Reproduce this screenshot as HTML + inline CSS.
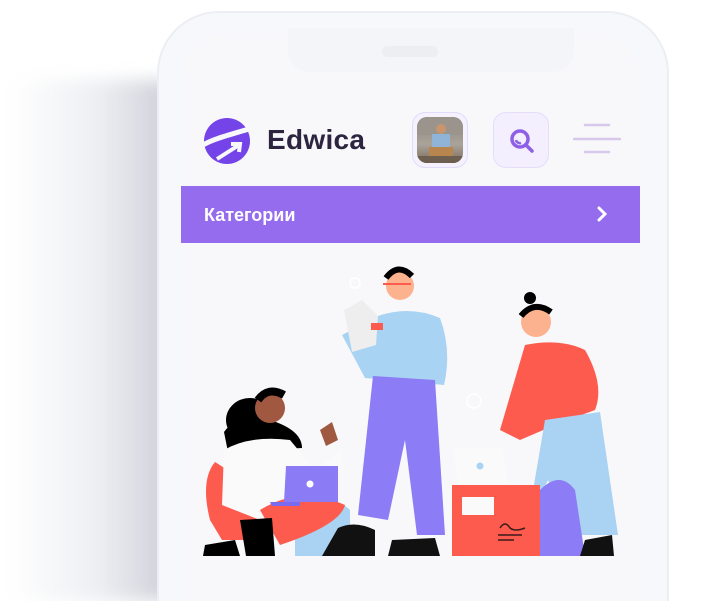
<!DOCTYPE html>
<html><head><meta charset="utf-8"><style>
html,body{margin:0;padding:0;width:706px;height:601px;overflow:hidden;background:#fff;font-family:"Liberation Sans",sans-serif}
#wrap{position:relative;width:706px;height:601px;overflow:hidden}
.shadow{position:absolute;left:10px;top:80px;width:160px;height:521px;background:linear-gradient(90deg,rgba(255,255,255,0) 0%,rgba(225,228,234,.6) 55%,#d3d6dd 92%,#c9ccd4 100%);filter:blur(8px)}
.phone{position:absolute;left:157px;top:11px;width:512px;height:590px;border-radius:62px 62px 0 0;background:#f7f8fb;border:2px solid #eceef3;border-bottom:none;box-sizing:border-box}
.screen{position:absolute;left:181px;top:34px;width:460px;height:567px;border-radius:42px 42px 0 0;background:#f8f8fb}
.notch{position:absolute;left:288px;top:28px;width:286px;height:44px;background:#f4f5f8;border-radius:0 0 22px 22px}
.speaker{position:absolute;left:382px;top:46px;width:56px;height:11px;border-radius:6px;background:#eceef2}
.logo{position:absolute;left:203px;top:115px}
.brand{position:absolute;left:267px;top:124px;font-size:28px;font-weight:bold;color:#2d2540;letter-spacing:.3px}
.av{position:absolute;left:412px;top:112px;width:56px;height:56px;border-radius:13px;background:#f5f2fe;border:1px solid #e2dbfa;box-sizing:border-box}
.av .img{position:absolute;left:4px;top:4px;width:46px;height:46px;border-radius:10px;overflow:hidden;background:linear-gradient(#8b8680,#a9a39a 60%,#7a6a58)}
.sr{position:absolute;left:493px;top:112px;width:56px;height:56px;border-radius:13px;background:#f4effe;border:1px solid #e6ddfb;box-sizing:border-box}
.bar{position:absolute;left:181px;top:186px;width:459px;height:57px;background:#956cee}
.bar span{position:absolute;left:23px;top:19px;font-size:18px;font-weight:bold;color:#fff}
</style></head><body><div id="wrap">
<div class="shadow"></div>
<div class="phone"></div>
<div class="screen"></div>
<div class="notch"></div>
<div class="speaker"></div>
<svg class="logo" width="48" height="52" viewBox="0 0 48 52">
<circle cx="24" cy="26" r="23" fill="#7444e8"/>
<path d="M0 30 C10 24 26 20 46 14" stroke="#f8f8fb" stroke-width="5" fill="none"/>
<path d="M14 44 L36 30 M28 29 L37 29 L36 37" stroke="#f8f8fb" stroke-width="4" fill="none"/>
</svg>
<div class="brand">Edwica</div>
<div class="av"><div class="img">
<svg width="46" height="46"><rect x="0" y="0" width="46" height="18" fill="#9a948c"/><circle cx="24" cy="12" r="5" fill="#c9956f"/><rect x="15" y="17" width="18" height="14" fill="#8fb4d8"/><rect x="12" y="30" width="24" height="9" fill="#b8854f"/><rect x="0" y="39" width="46" height="7" fill="#6d5e50"/></svg>
</div></div>
<div class="sr"><svg width="56" height="56" viewBox="0 0 56 56"><circle cx="26" cy="26" r="8" stroke="#8e60e6" stroke-width="3.5" fill="none"/><path d="M22 27 a4 4 0 0 0 5 3" stroke="#8e60e6" stroke-width="2.5" fill="none"/><path d="M32 32 L38 38" stroke="#8e60e6" stroke-width="3.5" stroke-linecap="round"/></svg></div>
<svg style="position:absolute;left:573px;top:122px" width="48" height="34"><path d="M12 3H36M1 17H47M12 30H36" stroke="#d7c8ec" stroke-width="2.6" stroke-linecap="round"/></svg>
<div class="bar"><span>Категории</span>
<svg style="position:absolute;left:414px;top:20px" width="14" height="16"><path d="M4 2 L10 8 L4 14" stroke="#fff" stroke-width="3" fill="none" stroke-linecap="round"/></svg></div>
<svg style="position:absolute;left:0;top:0" width="706" height="601" viewBox="0 0 706 601">
<path d="M295 515 Q330 490 350 510 L350 556 L295 556 Z" fill="#aad2f2"/>
<path d="M215 462 Q200 480 210 520 L222 540 L270 540 L275 500 Z" fill="#fd5b4e"/>
<ellipse cx="250" cy="420" rx="24" ry="22" fill="#000"/>
<path d="M224 432 Q240 410 270 420 Q302 430 302 448 L228 452 Z" fill="#000"/>
<circle cx="270" cy="408" r="15" fill="#a15841"/>
<path d="M258 400 Q268 386 284 395" stroke="#000" stroke-width="8" fill="none"/>
<path d="M224 450 Q250 435 290 440 L315 470 L340 452 L344 468 L300 505 L260 520 L222 505 Z" fill="#fafafa"/>
<path d="M320 430 L332 422 L338 440 L326 446 Z" fill="#a15841"/>
<path d="M260 510 Q300 485 345 505 Q340 525 280 545 Z" fill="#fd5b4e"/>
<path d="M240 520 L272 518 L275 556 L246 556 Z" fill="#000"/>
<path d="M205 545 L235 540 L240 556 L203 556 Z" fill="#000"/>
<path d="M286 466 L338 466 L338 502 L284 502 Z" fill="#8b7cf6"/>
<circle cx="310" cy="484" r="3.5" fill="#fff"/>
<path d="M270 502 L300 502 L300 506 L272 506Z" fill="#7a6af0"/>
<circle cx="400" cy="286" r="14" fill="#fdb28f"/>
<path d="M386 278 Q398 262 412 276" stroke="#000" stroke-width="6" fill="none"/>
<path d="M383 284 h28" stroke="#fd5b4e" stroke-width="2"/>
<path d="M378 316 Q410 305 440 318 Q452 350 444 385 L365 378 L342 335 Z" fill="#a9d3f3"/>
<path d="M344 310 L362 300 L378 316 L376 345 L352 352 Z" fill="#eeeeee"/>
<rect x="371" y="323" width="12" height="7" fill="#fd5b4e"/>
<path d="M373 376 L435 380 L445 535 L417 535 L405 440 L388 520 L358 515 Z" fill="#8c7cf5"/>
<path d="M338 528 Q355 520 375 530 L375 556 L322 556 Z" fill="#111"/>
<path d="M392 540 L435 538 L440 556 L388 556 Z" fill="#111"/>
<circle cx="355" cy="283" r="5" stroke="#fff" stroke-width="1.5" fill="none"/>
<circle cx="474" cy="401" r="7" stroke="#fff" stroke-width="1.5" fill="none"/>
<circle cx="530" cy="298" r="6" fill="#000"/>
<circle cx="536" cy="322" r="15" fill="#fdb28f"/>
<path d="M521 316 Q534 300 551 312" stroke="#000" stroke-width="6" fill="none"/>
<path d="M525 345 Q560 338 585 350 Q605 385 595 410 L555 425 L520 440 L500 430 Z" fill="#fd5b4e"/>
<path d="M545 420 L600 412 L618 535 L570 535 L548 480 L528 520 Z" fill="#aad2f2"/>
<path d="M540 490 Q560 470 575 490 L585 556 L540 556 Z" fill="#8c7cf5"/>
<path d="M585 540 L612 535 L614 556 L580 556Z" fill="#111"/>
<path d="M454 448 L502 448 L508 484 L458 484 Z" fill="#fafafa"/>
<circle cx="480" cy="466" r="3.5" fill="#a9d3f3"/>
<rect x="452" y="485" width="88" height="71" fill="#fd5b4e"/>
<rect x="462" y="497" width="32" height="18" fill="#fafafa"/>
<path d="M500 528 q5 -8 10 0 q5 4 15 0 M498 535 h24 M498 540 h16" stroke="#3b1b1b" stroke-width="1.5" fill="none"/>
</svg>
</div></body></html>
